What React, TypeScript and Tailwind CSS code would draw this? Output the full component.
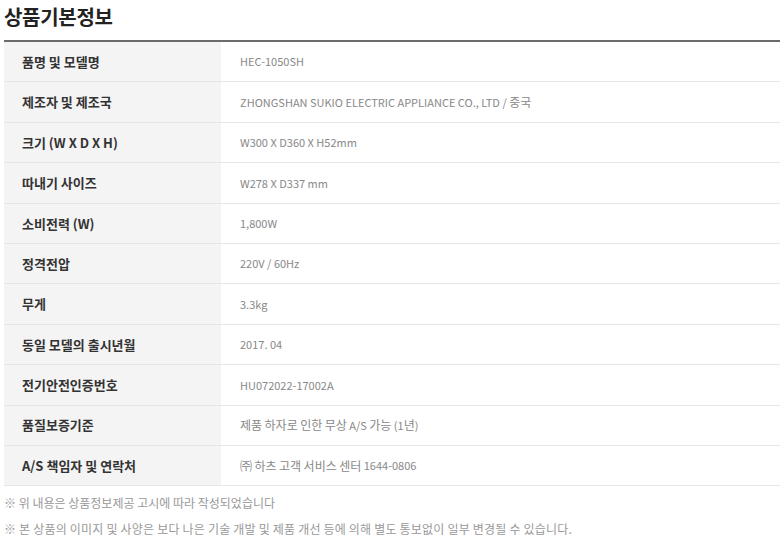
const rows: [string, string][] = [
  ["품명 및 모델명", "HEC-1050SH"],
  ["제조자 및 제조국", "ZHONGSHAN SUKIO ELECTRIC APPLIANCE CO., LTD / 중국"],
  ["크기 (W X D X H)", "W300 X D360 X H52mm"],
  ["따내기 사이즈", "W278 X D337 mm"],
  ["소비전력 (W)", "1,800W"],
  ["정격전압", "220V / 60Hz"],
  ["무게", "3.3kg"],
  ["동일 모델의 출시년월", "2017. 04"],
  ["전기안전인증번호", "HU072022-17002A"],
  ["품질보증기준", "제품 하자로 인한 무상 A/S 가능 (1년)"],
  ["A/S 책임자 및 연락처", "㈜ 하츠 고객 서비스 센터 1644-0806"],
];

// latin runs look a bit smaller than hangul in the original font
function Value({ text }: { text: string }) {
  const parts = text.split(/([\uac00-\ud7a3\u3200-\u32ff]+)/);
  return (
    <>
      {parts.map((p, i) =>
        i % 2 === 1 ? (
          <span key={i}>{p}</span>
        ) : (
          <span key={i} className="text-[11px]">
            {p}
          </span>
        )
      )}
    </>
  );
}

export default function App() {
  return (
    <div
      className="w-[780px] h-[540px] overflow-hidden bg-white pl-[4px]"
      style={{ fontFamily: '"Noto Sans CJK KR", "Noto Sans", sans-serif' }}
    >
      <h2 className="pt-[4px] h-[40px] text-[20px] leading-[26px] font-bold text-[#222] tracking-[-0.3px]">
        상품기본정보
      </h2>

      <div className="border-t-2 border-[#6b6b6b]">
        {rows.map(([label, value]) => (
          <div key={label} className="flex h-[40.4px] border-b border-[#e6e6e6]">
            <div className="w-[217px] shrink-0 bg-[#f4f4f4] flex items-center pl-[18px] text-[13px] font-semibold text-[#333]">
              {label}
            </div>
            <div className="flex-1 flex items-center pl-[19px] text-[12px] text-[#888] whitespace-pre">
              <Value text={value} />
            </div>
          </div>
        ))}
      </div>

      <div className="pt-[8px] text-[12px] text-[#999] flex flex-col gap-[8px]">
        <p className="leading-[18px]">※ 위 내용은 상품정보제공 고시에 따라 작성되었습니다</p>
        <p className="leading-[18px] tracking-[0.2px]">
          ※ 본 상품의 이미지 및 사양은 보다 나은 기술 개발 및 제품 개선 등에 의해 별도 통보없이 일부 변경될 수 있습니다.
        </p>
      </div>
    </div>
  );
}
